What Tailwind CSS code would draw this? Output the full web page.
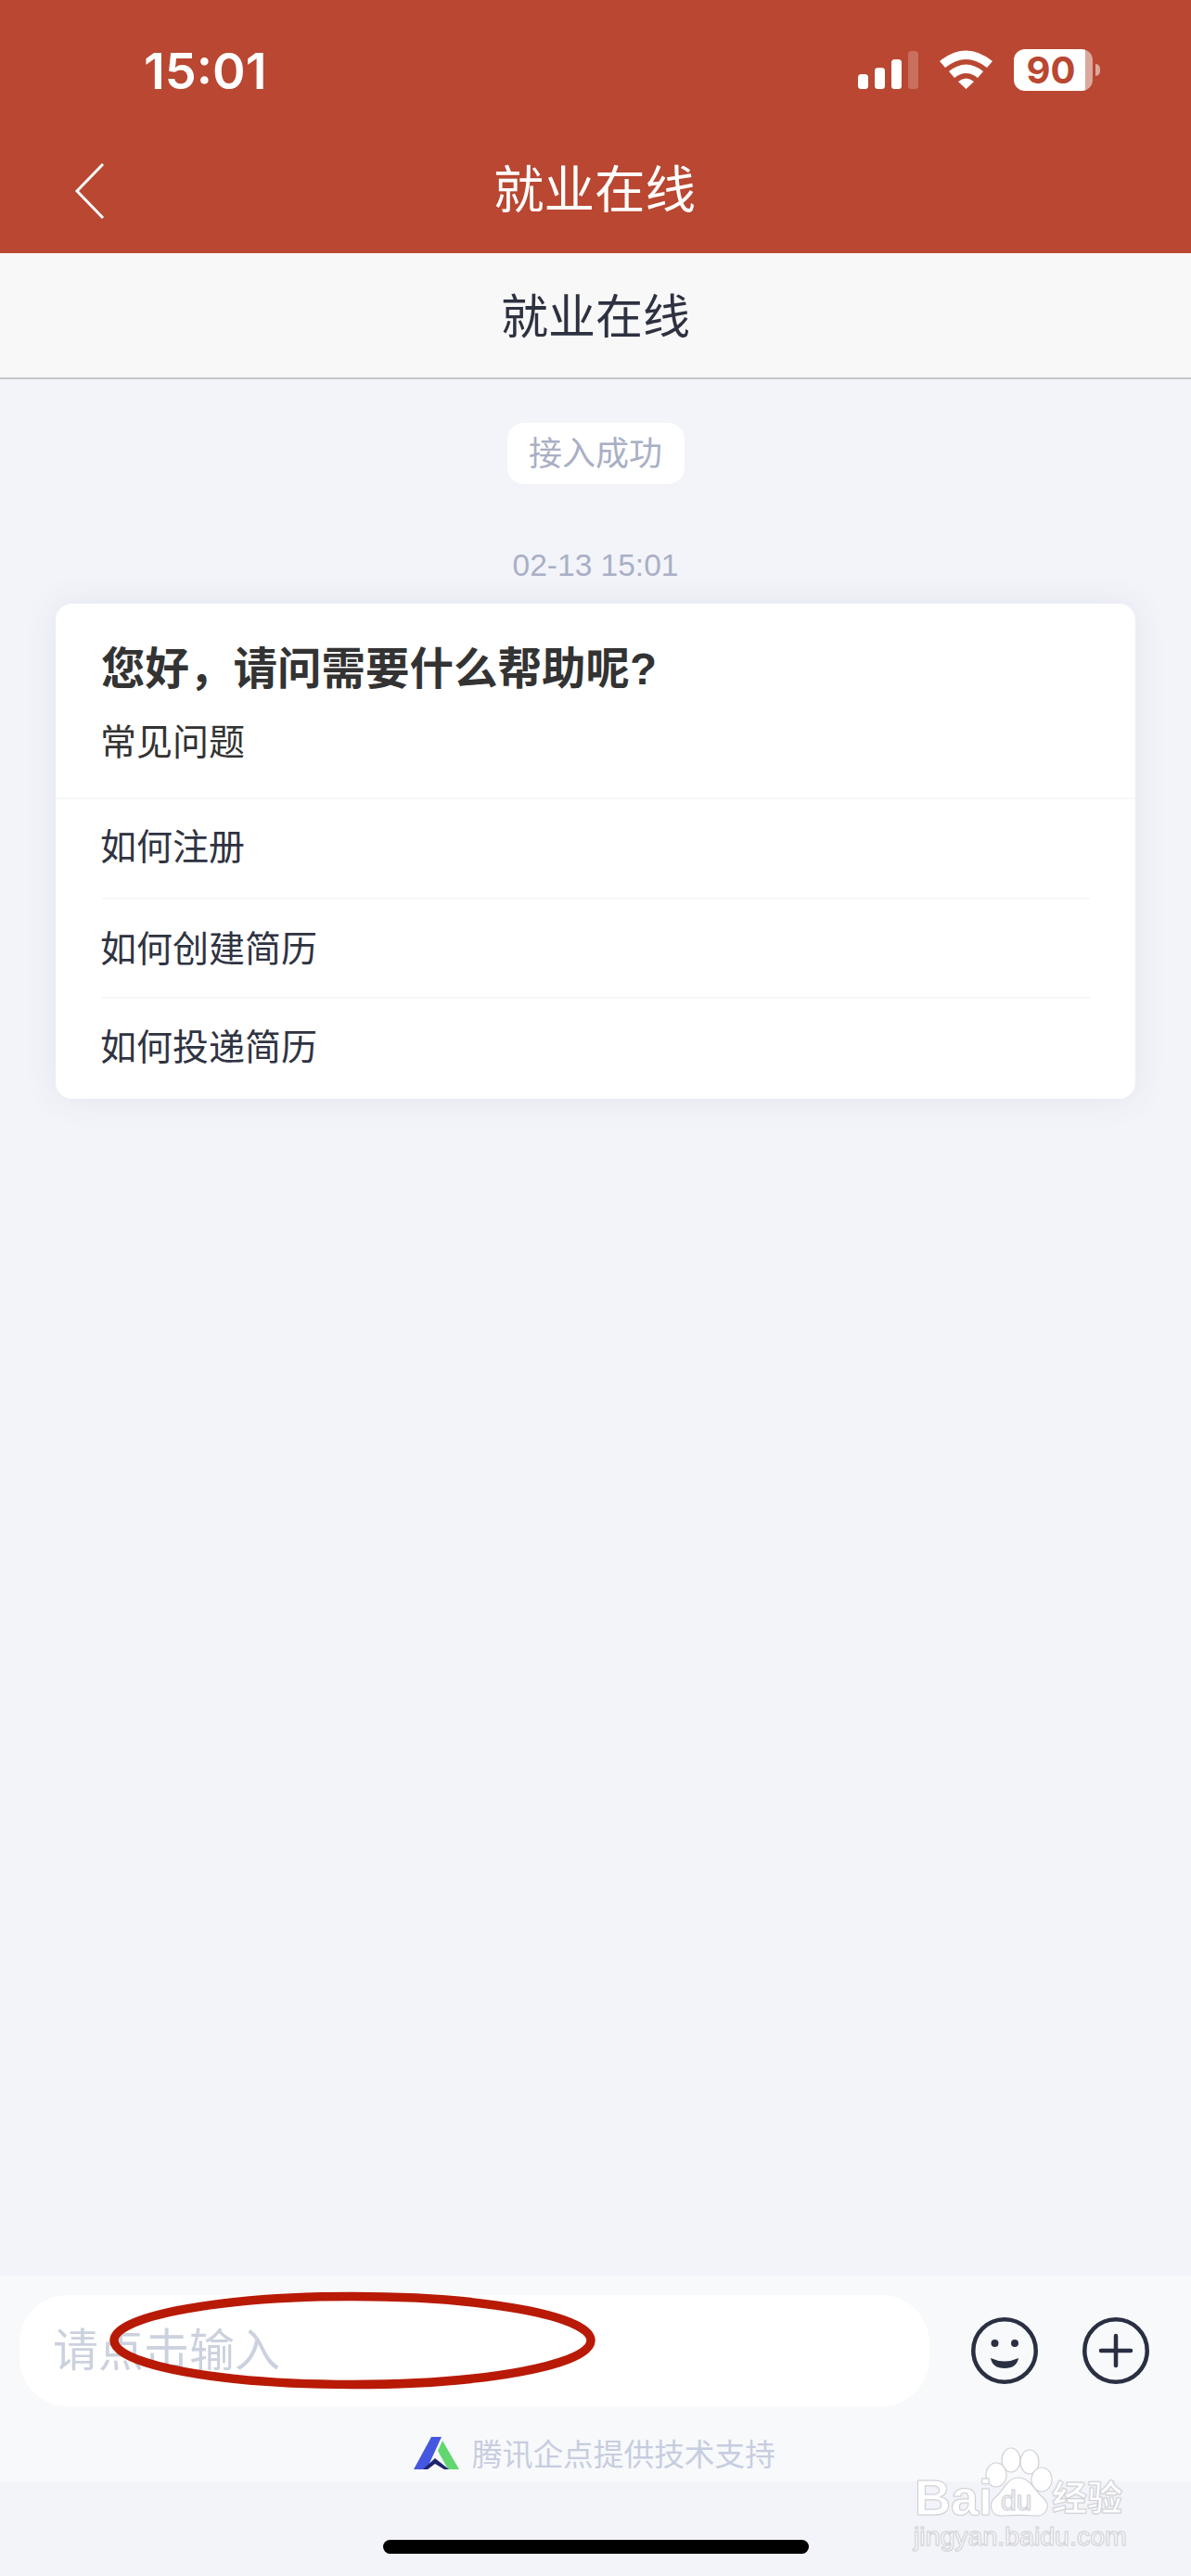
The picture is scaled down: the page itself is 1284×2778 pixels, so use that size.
<!DOCTYPE html>
<html lang="zh-CN">
<head>
  <meta charset="UTF-8">
  <meta name="viewport" content="width=device-width, initial-scale=1.0">
  <title>就业在线</title>
  <script src="https://cdn.jsdelivr.net/npm/@tailwindcss/browser@4"></script>
</head>
<body class="relative flex flex-col w-[1284px] h-[2778px] overflow-hidden bg-[#f3f4f9] font-['Liberation_Sans','Noto_Sans_CJK_SC',sans-serif]">

  <!-- Red header -->
  <header class="h-[273px] bg-[#b94731] text-white">
    <!-- Status bar -->
    <div class="flex items-start justify-between h-[152px] pt-[54px] pl-[155px] pr-[98px]">
      <span class="text-[54px] leading-[46px] font-semibold font-['Inter',sans-serif]">15:01</span>
      <div class="flex items-end -mt-px">
        <svg class="w-[65px] h-[41px]" viewBox="0 0 65 41" fill="#fff">
          <rect x="0" y="25" width="11" height="16" rx="3.5"/>
          <rect x="18" y="18" width="11" height="23" rx="3.5"/>
          <rect x="36" y="9" width="11" height="32" rx="3.5"/>
          <rect x="54" y="0" width="11" height="41" rx="3.5" fill-opacity=".22"/>
        </svg>
        <svg class="w-[57px] h-[42px] ml-[23px]" viewBox="0 0 57 42" fill="#fff">
          <path d="M0 12Q28.500 -11 57 12L51 19Q28.500 1 6 19Z"/>
          <path d="M10 23Q28.500 8 47 23L41 30Q28.500 20 16 30Z"/>
          <path d="M20 34Q28.500 27 37 34L28.500 42Z"/>
        </svg>
        <div class="relative flex items-center ml-[23px] -mb-[2px]">
          <div class="flex items-center justify-center w-[85px] h-[45px] rounded-[12px] bg-[linear-gradient(90deg,#fff_0,#fff_77px,#dba89d_77px,#dba89d_85px)] pr-[5px] text-[#b94731] text-[40px] font-bold font-['Inter',sans-serif] leading-none">90</div>
          <div class="w-[5px] h-[13px] ml-[3px] rounded-r-full bg-[#dba89d]"></div>
        </div>
      </div>
    </div>
    <!-- Nav -->
    <div class="relative flex items-center justify-center h-[106px] pt-[3px]">
      <svg class="absolute left-[80px] top-[22px] w-[34px] h-[64px]" viewBox="0 0 34 64" fill="none" stroke="#fff" stroke-width="3">
        <path d="M31 3L3 32L31 61"/>
      </svg>
      <span class="text-[54.500px] leading-none pr-[2px]">就业在线</span>
    </div>
  </header>

  <!-- Sub title -->
  <div class="flex items-center justify-center h-[136px] pt-[4px] bg-[#f8f8f9] border-b-2 border-[#c6c7cd]">
    <span class="text-[51px] leading-none text-[#2e3140]">就业在线</span>
  </div>

  <!-- Chat -->
  <main class="flex-1 flex flex-col items-center">
    <div class="flex items-center justify-center w-[191px] h-[66px] mt-[47px] pt-[2px] rounded-[18px] bg-white text-[36px] leading-none text-[#a9afc6]">接入成功</div>
    <div class="mt-[68px] text-[33.500px] leading-[40px] text-[#a9afc6]">02-13 15:01</div>
    <section class="w-[1164px] mt-[21px] rounded-[18px] bg-white shadow-[0_0_36px_rgba(70,80,140,0.09)]">
      <div class="pt-[41px] pb-[34px] pl-[49px] pr-[50px] border-b-2 border-[#f6f7f9]">
        <h2 class="text-[47.500px] leading-[60px] font-bold text-[#333]">您好，请问需要什么帮助呢?</h2>
        <p class="mt-[24px] -ml-px text-[39px] leading-[50px] text-[#333]">常见问题</p>
      </div>
      <ul class="pl-[50px] pr-[49px] text-[39px] leading-none text-[#2f3342]">
        <li class="flex items-center h-[108px] pb-1 indent-[-2px] border-b-2 border-[#f6f7f9]">如何注册</li>
        <li class="flex items-center h-[107px] pt-[1px] indent-[-2px] border-b-2 border-[#f6f7f9]">如何创建简历</li>
        <li class="flex items-center h-[108px] pb-1 indent-[-2px]">如何投递简历</li>
      </ul>
    </section>
  </main>

  <!-- Input bar -->
  <div class="relative h-[222px] bg-[#f8f9fb]">
    <div class="flex items-center pt-[21px] pl-[21px]">
      <div class="flex items-center w-[981px] h-[120px] pl-[36px] pt-[1px] rounded-[52px] bg-white text-[49px] leading-none text-[#ccd1de]">请点击输入</div>
      <button class="ml-[45px]" aria-label="表情">
        <svg class="block w-[72px] h-[72px]" viewBox="0 0 72 72" fill="none" stroke="#2a2f42" stroke-width="4.500">
          <circle cx="36" cy="36" r="33.700"/>
          <circle cx="25.500" cy="28" r="4" fill="#2a2f42" stroke="none"/>
          <circle cx="47" cy="28" r="4" fill="#2a2f42" stroke="none"/>
          <path d="M21 44Q36 51 51 44Q49 55 36 55Q23 55 21 44Z" fill="#2a2f42" stroke="none"/>
        </svg>
      </button>
      <button class="ml-[48px]" aria-label="更多">
        <svg class="block w-[72px] h-[72px]" viewBox="0 0 72 72" fill="none" stroke="#2a2f42" stroke-width="4.500" stroke-linecap="round">
          <circle cx="36" cy="36" r="33.700"/>
          <path d="M20 36H52M36 20V52"/>
        </svg>
      </button>
    </div>
    <div class="flex items-center justify-center gap-[14px] mt-[33px] pr-[2px]">
      <svg class="w-[49px] h-[36px]" viewBox="0 0 49 36">
        <path d="M19 0H30L14 35H0Z" fill="#4557e0"/>
        <path d="M31 4L49 35H37L26 15Z" fill="#62d66f"/>
        <path d="M10 35L23 23L38 35H33L23 29L15 35Z" fill="#1c2470"/>
      </svg>
      <span class="relative top-[2px] text-[32.700px] leading-none text-[#c7cde0]">腾讯企点提供技术支持</span>
    </div>
    <!-- Red hand drawn annotation -->
    <svg class="absolute left-[116px] top-[16px] w-[528px] h-[108px]" viewBox="0 0 528 108" fill="none">
      <ellipse cx="264" cy="54" rx="257" ry="47.500" stroke="#b81a06" stroke-width="9.500"/>
    </svg>
  </div>

  <!-- Home indicator -->
  <div class="flex justify-center h-[102px] pt-[63px]">
    <div class="w-[459px] h-[15px] rounded-full bg-black"></div>
  </div>

  <!-- Baidu watermark -->
  <div class="absolute left-[975px] top-[2630px] w-[250px] h-[130px] text-white [-webkit-text-stroke:1px_#cfd0d6] [text-shadow:0_0_2px_#d5d6dc]">
    <svg class="absolute left-0 top-0 w-[250px] h-[130px]" viewBox="0 0 250 130" fill="#fff" fill-opacity=".9" stroke="#d0d1d7" stroke-width="1.2">
      <ellipse cx="115" cy="23" rx="10" ry="13"/>
      <ellipse cx="135" cy="25" rx="10" ry="13"/>
      <ellipse cx="99" cy="39" rx="11" ry="13"/>
      <ellipse cx="148" cy="44" rx="11" ry="13"/>
      <path d="M123 42C136 42 140 56 150 64C158 72 154 84 140 83C128 82 118 82 106 83C92 84 91 70 97 64C108 56 110 42 123 42Z"/>
    </svg>
    <span class="absolute left-[11px] top-[41px] text-[54px] leading-[44px] font-bold">Bai</span>
    <span class="absolute left-[104px] top-[53px] text-[30px] leading-[28px] text-[#f3f4f9]">du</span>
    <span class="absolute left-[159px] top-[44px] text-[38px] leading-[40px] font-bold">经验</span>
    <span class="absolute left-[10px] top-[90px] text-[28.500px] leading-[30px]">jingyan.baidu.com</span>
  </div>
</body>
</html>
